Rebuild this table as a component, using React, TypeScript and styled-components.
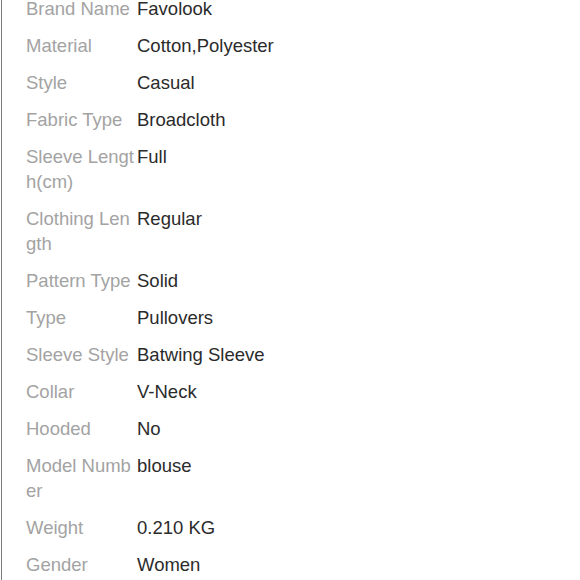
import React from "react";
import styled, { createGlobalStyle } from "styled-components";

const Global = createGlobalStyle`
  html, body { margin: 0; padding: 0; background: #fff; }
  body { font-family: "Liberation Sans", Arial, Helvetica, sans-serif; overflow: hidden; }
`;

const Page = styled.div`
  width: 580px;
  height: 580px;
  overflow: hidden;
  box-sizing: border-box;
  padding-left: 1px;
  background: #fff;
  display: flex;
`;

const Panel = styled.div`
  flex: 1;
  min-height: 580px;
  border-left: 1px solid #7a7a7a;
  padding-left: 24px;
`;

const List = styled.dl`
  margin: -10px 0 0 0;
  display: flex;
  flex-direction: column;
`;

const Row = styled.div`
  display: flex;
  padding: 6px 0;
  font-size: 18.5px;
  line-height: 25px;
`;

const Label = styled.dt`
  width: 110px;
  flex: none;
  margin: 0 1px 0 0;
  color: #a3a3a3;
  word-break: break-all;
`;

const Value = styled.dd`
  margin: 0;
  color: #2b2b2b;
`;

const specs: [string, string][] = [
  ["Brand Name", "Favolook"],
  ["Material", "Cotton,Polyester"],
  ["Style", "Casual"],
  ["Fabric Type", "Broadcloth"],
  ["Sleeve Length(cm)", "Full"],
  ["Clothing Length", "Regular"],
  ["Pattern Type", "Solid"],
  ["Type", "Pullovers"],
  ["Sleeve Style", "Batwing Sleeve"],
  ["Collar", "V-Neck"],
  ["Hooded", "No"],
  ["Model Number", "blouse"],
  ["Weight", "0.210 KG"],
  ["Gender", "Women"],
];

export default function App() {
  return (
    <>
      <Global />
      <Page>
        <Panel>
          <List>
            {specs.map(([k, v]) => (
              <Row key={k}>
                <Label>{k}</Label>
                <Value>{v}</Value>
              </Row>
            ))}
          </List>
        </Panel>
      </Page>
    </>
  );
}
